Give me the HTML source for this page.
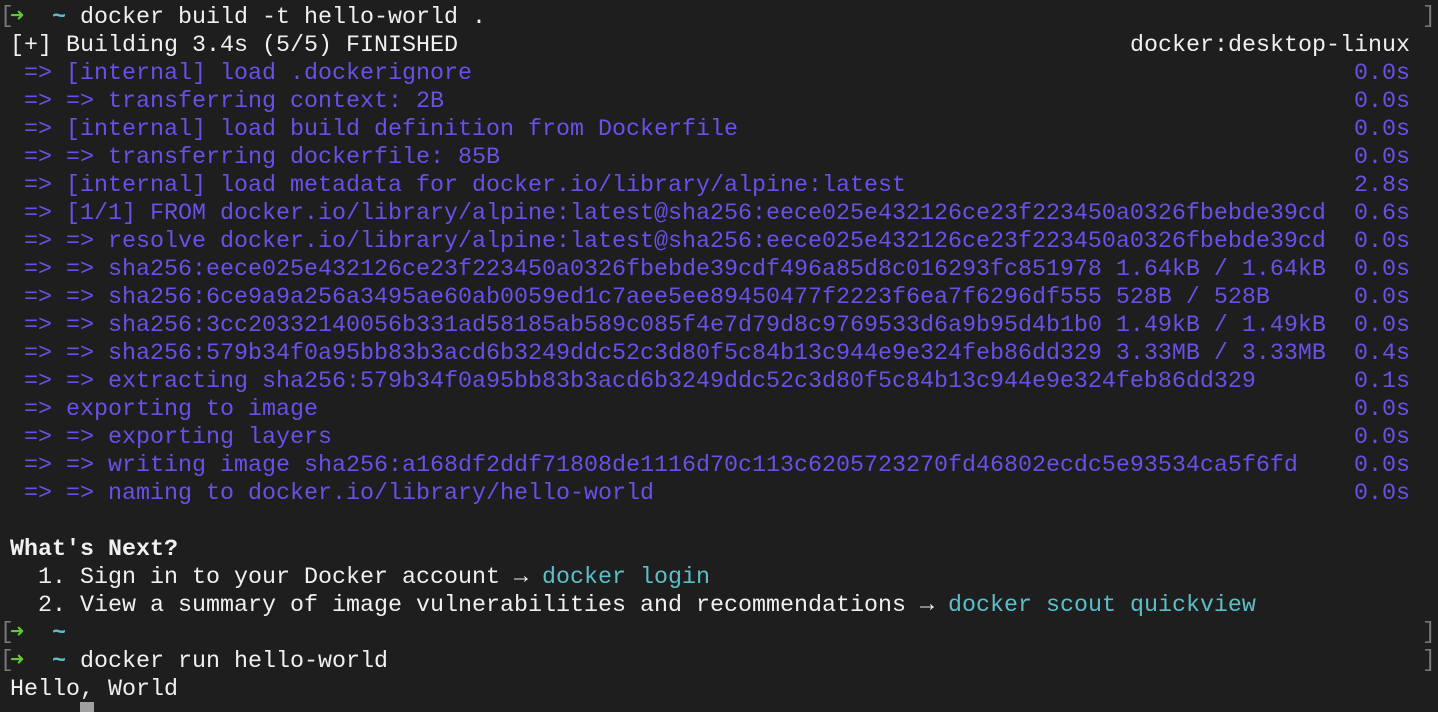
<!DOCTYPE html><html><head><style>
html,body{margin:0;padding:0;background:#1e1e1e;width:1438px;height:712px;overflow:hidden}
.w{position:absolute;left:10px;top:4px;width:1400px;font-family:"Liberation Mono",monospace;font-size:23.33px;line-height:28px;color:#f0f0f0}
.l{position:relative;height:28px;white-space:pre}
.t{position:absolute;right:0;top:0}
.p{color:#6b4fe8}.g{color:#5fc93a}.c{color:#5bbfc9}.b{font-weight:bold}.tl{font-weight:bold}
.br{position:absolute;font-family:"Liberation Mono",monospace;font-size:23px;color:#777;line-height:28px}
.cur{position:absolute;left:80px;top:702px;width:14px;height:10px;background:#a0a0a0}
</style></head><body>
<div class="br" style="left:0;top:2px">[</div><div class="br" style="left:1422px;top:2px">]</div>
<div class="br" style="left:0;top:618px">[</div><div class="br" style="left:1422px;top:618px">]</div>
<div class="br" style="left:0;top:646px">[</div><div class="br" style="left:1422px;top:646px">]</div>
<div class="w"><div class="l"><span class="g">➜</span>  <span class="c tl">~</span> docker build -t hello-world .</div><div class="l">[+] Building 3.4s (5/5) FINISHED<span class="t">docker:desktop-linux</span></div><div class="l p"> => [internal] load .dockerignore<span class="t">0.0s</span></div><div class="l p"> => => transferring context: 2B<span class="t">0.0s</span></div><div class="l p"> => [internal] load build definition from Dockerfile<span class="t">0.0s</span></div><div class="l p"> => => transferring dockerfile: 85B<span class="t">0.0s</span></div><div class="l p"> => [internal] load metadata for docker.io/library/alpine:latest<span class="t">2.8s</span></div><div class="l p"> => [1/1] FROM docker.io/library/alpine:latest@sha256:eece025e432126ce23f223450a0326fbebde39cd<span class="t">0.6s</span></div><div class="l p"> => => resolve docker.io/library/alpine:latest@sha256:eece025e432126ce23f223450a0326fbebde39cd<span class="t">0.0s</span></div><div class="l p"> => => sha256:eece025e432126ce23f223450a0326fbebde39cdf496a85d8c016293fc851978 1.64kB / 1.64kB<span class="t">0.0s</span></div><div class="l p"> => => sha256:6ce9a9a256a3495ae60ab0059ed1c7aee5ee89450477f2223f6ea7f6296df555 528B / 528B<span class="t">0.0s</span></div><div class="l p"> => => sha256:3cc20332140056b331ad58185ab589c085f4e7d79d8c9769533d6a9b95d4b1b0 1.49kB / 1.49kB<span class="t">0.0s</span></div><div class="l p"> => => sha256:579b34f0a95bb83b3acd6b3249ddc52c3d80f5c84b13c944e9e324feb86dd329 3.33MB / 3.33MB<span class="t">0.4s</span></div><div class="l p"> => => extracting sha256:579b34f0a95bb83b3acd6b3249ddc52c3d80f5c84b13c944e9e324feb86dd329<span class="t">0.1s</span></div><div class="l p"> => exporting to image<span class="t">0.0s</span></div><div class="l p"> => => exporting layers<span class="t">0.0s</span></div><div class="l p"> => => writing image sha256:a168df2ddf71808de1116d70c113c6205723270fd46802ecdc5e93534ca5f6fd<span class="t">0.0s</span></div><div class="l p"> => => naming to docker.io/library/hello-world<span class="t">0.0s</span></div><div class="l"></div><div class="l b">What's Next?</div><div class="l">  1. Sign in to your Docker account → <span class="c">docker login</span></div><div class="l">  2. View a summary of image vulnerabilities and recommendations → <span class="c">docker scout quickview</span></div><div class="l"><span class="g">➜</span>  <span class="c tl">~</span></div><div class="l"><span class="g">➜</span>  <span class="c tl">~</span> docker run hello-world</div><div class="l">Hello, World</div></div>
<div class="cur"></div>
</body></html>
